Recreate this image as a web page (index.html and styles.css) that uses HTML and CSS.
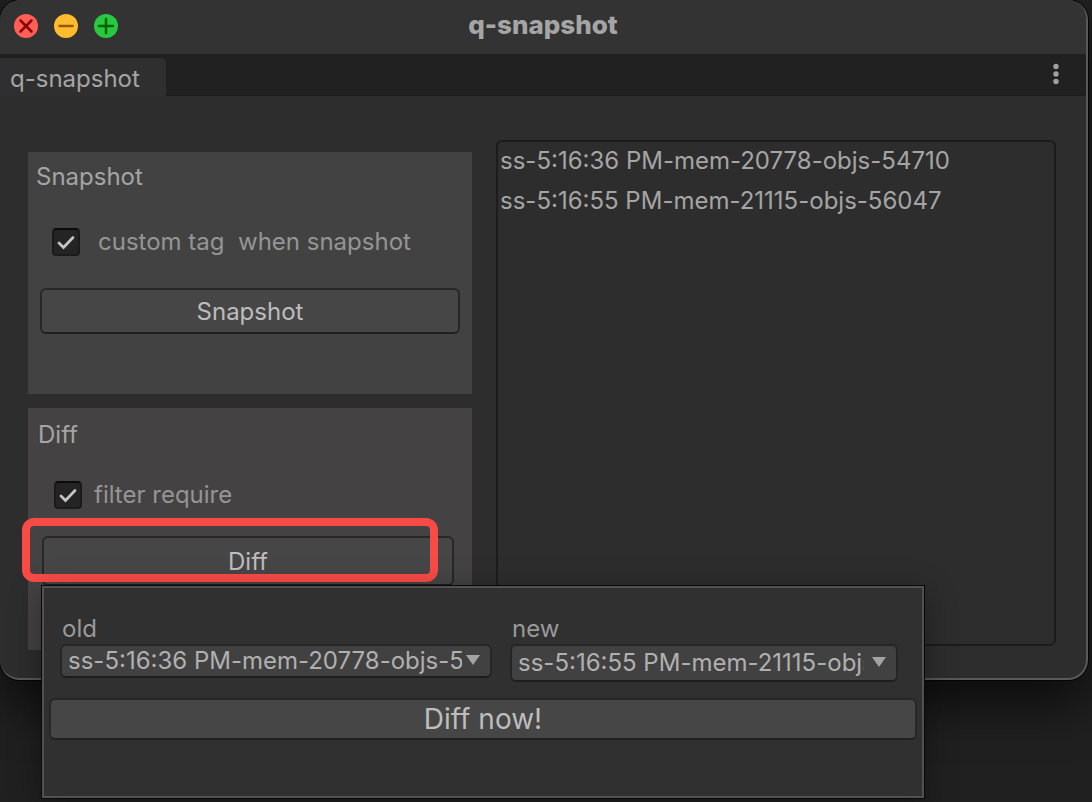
FILE: index.html
```html
<!DOCTYPE html>
<html lang="en">
<head>
<meta charset="utf-8">
<title>q-snapshot</title>
<link rel="stylesheet" href="styles.css">
</head>
<body>
<main class="window">
  <header class="titlebar">
    <div class="lights">
      <button class="light light-close" type="button" aria-label="Close"><svg viewBox="0 0 24 24"><path d="M6.500 6.500l11 11M17.500 6.500l-11 11"/></svg></button>
      <button class="light light-min" type="button" aria-label="Minimize"><svg viewBox="0 0 24 24"><path d="M5.500 12h13"/></svg></button>
      <button class="light light-zoom" type="button" aria-label="Zoom"><svg viewBox="0 0 24 24"><path d="M5 12h14M12 5v14"/></svg></button>
    </div>
    <h1 class="title">q-snapshot</h1>
  </header>
  <nav class="tabs">
    <button class="tab" type="button">q-snapshot</button>
    <button class="more" type="button" aria-label="More options"><svg viewBox="0 0 6 22" width="6" height="22"><circle cx="3" cy="3.500" r="2.700"/><circle cx="3" cy="11" r="2.700"/><circle cx="3" cy="18.500" r="2.700"/></svg></button>
  </nav>
  <div class="content">
    <div class="panels">
      <section class="panel">
        <h2 class="panel-title">Snapshot</h2>
        <label class="check check-wide">
          <span class="box"><input type="checkbox" checked><svg viewBox="0 0 28 28"><path d="M7 15l4.500 4.500L21 9.500"/></svg></span>
          <span class="check-text">custom tag  when snapshot</span>
        </label>
        <button class="btn" type="button">Snapshot</button>
      </section>
      <section class="panel panel-diff">
        <h2 class="panel-title">Diff</h2>
        <label class="check">
          <span class="box"><input type="checkbox" checked><svg viewBox="0 0 28 28"><path d="M7 15l4.500 4.500L21 9.500"/></svg></span>
          <span class="check-text">filter require</span>
        </label>
        <div class="anchor">
          <button class="btn btn-diff" type="button">Diff</button>
          <div class="marker"></div>
          <div class="popup" role="dialog" aria-label="Diff">
            <div class="fields">
              <div class="field">
                <label for="old">old</label>
                <div class="drop">
                  <select id="old"><option>ss-5:16:36 PM-mem-20778-objs-54710</option><option>ss-5:16:55 PM-mem-21115-objs-56047</option></select>
                  <svg class="arrow" viewBox="0 0 14 10"><path d="M0 0h14L7 10z"/></svg>
                </div>
              </div>
              <div class="field field-new">
                <label for="new">new</label>
                <div class="drop">
                  <select id="new"><option>ss-5:16:55 PM-mem-21115-objs-56047</option><option>ss-5:16:36 PM-mem-20778-objs-54710</option></select>
                  <svg class="arrow" viewBox="0 0 14 10"><path d="M0 0h14L7 10z"/></svg>
                </div>
              </div>
            </div>
            <button class="btn btn-now" type="button">Diff now!</button>
          </div>
        </div>
      </section>
    </div>
    <ul class="list">
      <li>ss-5:16:36 PM-mem-20778-objs-54710</li>
      <li>ss-5:16:55 PM-mem-21115-objs-56047</li>
    </ul>
  </div>
</main>
</body>
</html>
```
FILE: styles.css
```css
* { box-sizing: border-box; }

body {
  margin: 0;
  min-height: 100vh;
  overflow: hidden;
  background: #202020;
  color: #a5a5a5;
  font: 24px/28px Inter, "Liberation Sans", sans-serif;
}

button, select, input { font: inherit; color: inherit; margin: 0; }
h1, h2, ul { margin: 0; padding: 0; font: inherit; }

.window {
  position: relative;
  margin-right: 4px;
  border: solid #595959;
  border-width: 0 2px 2px 0;
  border-radius: 20px;
  background: #2d2d2d;
  box-shadow: 0 0 0 1px #050505, 0 24px 50px #000000a0;
}

.titlebar {
  display: grid;
  grid-template-columns: 1fr auto 1fr;
  align-items: center;
  height: 54px;
  padding: 0 14px 2px;
  border-radius: 20px 18px 0 0;
  background: #333;
}

.lights { display: flex; gap: 16px; }

.light {
  width: 24px;
  height: 24px;
  padding: 0;
  border: 0;
  border-radius: 50%;
}
.light svg { display: block; fill: none; stroke-width: 2.5; stroke-linecap: round; }
.light-close { background: #ff5f57; stroke: #8c0000; }
.light-min { background: #febc2e; stroke: #985700; }
.light-zoom { background: #28c840; stroke: #006500; }

.title { font-size: 26px; font-weight: 800; padding-bottom: 2px; }

.tabs {
  display: flex;
  justify-content: space-between;
  align-items: center;
  height: 42px;
  padding: 0 27px 2px 0;
  background: #212121;
  box-shadow: inset 0 -1px #1b1b1b;
}

.tab {
  align-self: flex-end;
  height: 38px;
  margin-bottom: -2px;
  padding: 4px 26px 0 10px;
  border: 0;
  border-radius: 0 5px 0 0;
  background: #2f2f2f;
}

.more { display: flex; padding: 0; border: 0; background: none; }
.more svg { fill: #a0a0a0; }

.content {
  display: grid;
  grid-template-columns: 444fr 560fr;
  gap: 24px;
  padding: 44px 30px 28px 28px;
}

.panels {
  display: grid;
  gap: 14px;
  padding-top: 12px;
}

.panel {
  display: flex;
  flex-direction: column;
  height: 242px;
  padding: 11px 12px;
  background: #424242;
}
.panel-diff { padding: 13px 18px 13px 14px; background: #454243; }

.panel-title { margin-left: -4px; }

.check {
  display: flex;
  align-items: center;
  gap: 12px;
  margin: 32px 12px 27px;
  color: #959595;
}
.check-wide { gap: 18px; margin: 37px 12px 32px; }
.check-text { white-space: pre; }

.box { display: grid; width: 28px; height: 28px; }
.box > * { grid-area: 1 / 1; }
.box input {
  appearance: none;
  width: 28px;
  height: 28px;
  border: 2px solid #1b1b1b;
  border-top-color: #0c0c0c;
  border-radius: 4px;
  background: #242424;
}
.box svg {
  position: relative;
  pointer-events: none;
  fill: none;
  stroke: #c4c4c4;
  stroke-width: 2.7;
  stroke-linecap: round;
}

.btn {
  width: 100%;
  height: 46px;
  padding: 1px 0 0;
  border: 2px solid #272727;
  border-bottom-color: #202020;
  border-radius: 6px;
  background: #464646;
  color: #bdbdbd;
}

.anchor { position: relative; }
.btn-diff { display: block; height: 50px; }

.marker {
  position: absolute;
  inset: -18px 16px 4px -20px;
  border: 8px solid #f94b46;
  border-radius: 12px;
}

.popup {
  position: absolute;
  top: 100%;
  left: 0;
  width: 882px;
  padding: 27px 5px 56px;
  border: 2px solid #515151;
  background: #303030;
  box-shadow: 0 0 0 1px #080808, 0 8px 30px #00000060;
}

.fields {
  display: grid;
  grid-template-columns: 432fr 388fr;
  align-items: start;
  gap: 18px;
  padding: 0 19px 0 11px;
}
.field label { display: block; padding-left: 2px; color: #999; }

.drop { display: grid; align-items: center; margin-top: 1px; }
.drop > * { grid-area: 1 / 1; }
.drop select {
  appearance: none;
  width: 100%;
  height: 34px;
  padding: 0 28px 0 6px;
  border: 2px solid #262626;
  border-bottom-color: #1e1e1e;
  border-radius: 6px;
  background: #414141;
  color: #b0b0b0;
}
.drop .arrow {
  justify-self: end;
  width: 14px;
  margin-right: 12px;
  margin-bottom: 3px;
  fill: #a3a3a3;
  pointer-events: none;
}
.field-new .drop select { height: 38px; padding-right: 32px; }

.btn-now { display: block; height: 42px; margin-top: 16px; padding: 0; font-size: 28px; }

.list {
  margin-bottom: 4px;
  padding: 5px 2px;
  border: 2px solid #1c1c1c;
  border-radius: 6px;
  list-style: none;
}
.list li { height: 40px; white-space: nowrap; }
```
